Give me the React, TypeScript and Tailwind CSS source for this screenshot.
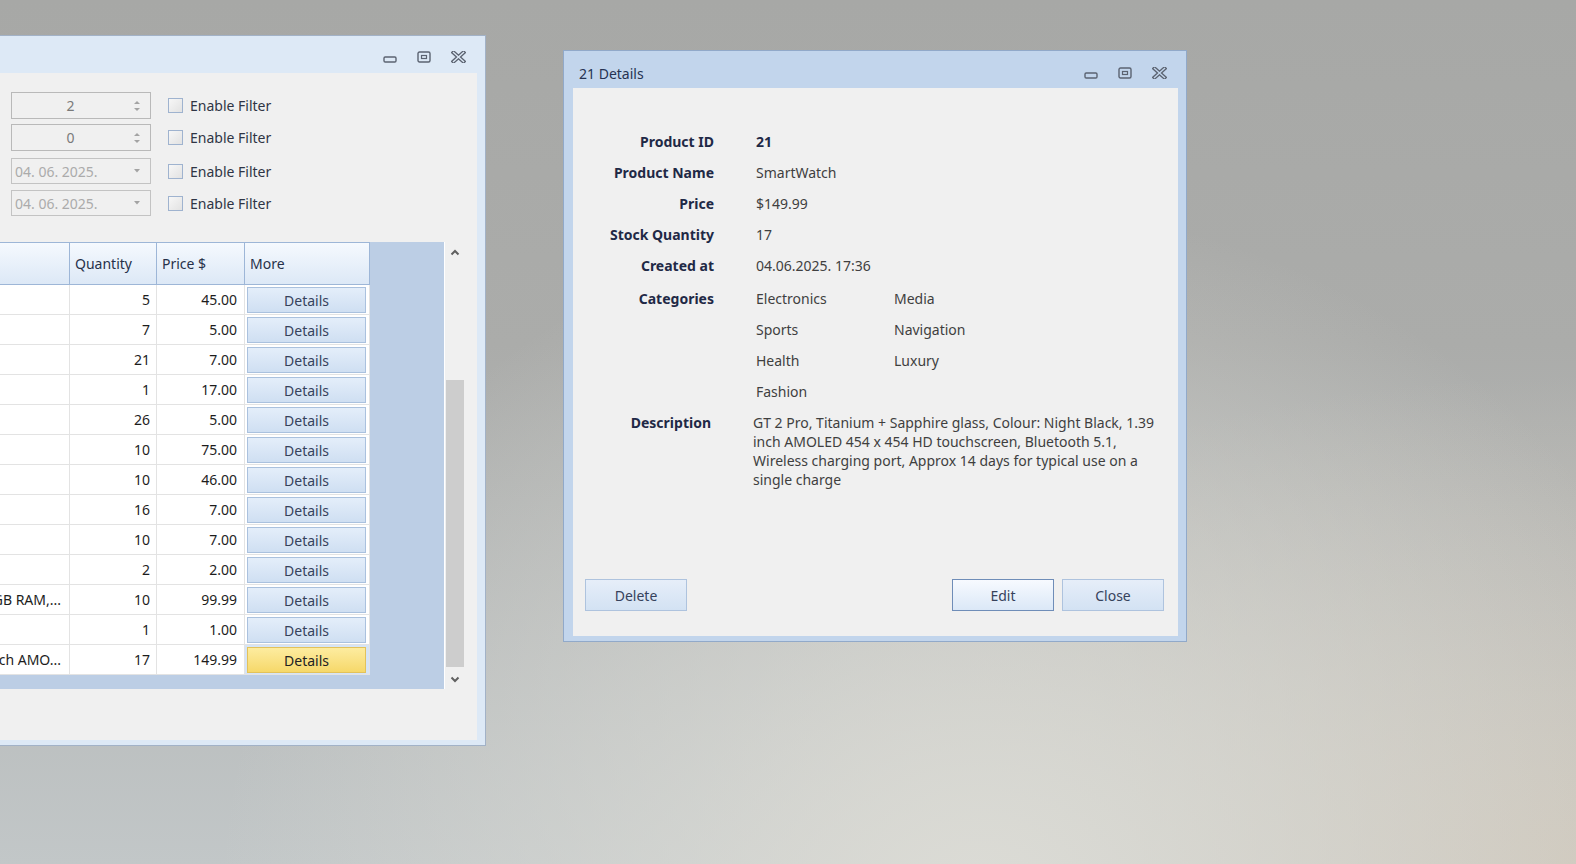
import React from 'react';

const font = "font-['Noto_Sans',sans-serif]";

const rows = [
  { name: '', qty: '5', price: '45.00' },
  { name: '', qty: '7', price: '5.00' },
  { name: '', qty: '21', price: '7.00' },
  { name: '', qty: '1', price: '17.00' },
  { name: '', qty: '26', price: '5.00' },
  { name: '', qty: '10', price: '75.00' },
  { name: '', qty: '10', price: '46.00' },
  { name: '', qty: '16', price: '7.00' },
  { name: '', qty: '10', price: '7.00' },
  { name: '', qty: '2', price: '2.00' },
  { name: '8GB RAM,...', qty: '10', price: '99.99' },
  { name: '', qty: '1', price: '1.00' },
  { name: 'inch AMO...', qty: '17', price: '149.99', active: true },
];

const details = [
  { label: 'Product ID', value: '21', bold: true },
  { label: 'Product Name', value: 'SmartWatch' },
  { label: 'Price', value: '$149.99' },
  { label: 'Stock Quantity', value: '17' },
  { label: 'Created at', value: '04.06.2025. 17:36' },
];

const categories = ['Electronics', 'Media', 'Sports', 'Navigation', 'Health', 'Luxury', 'Fashion'];

const TitleButtons = ({ bg }: { bg: string }) => (
  <div className="flex items-center gap-[20px]">
    <svg width="14" height="12" viewBox="0 0 14 12">
      <rect x="1" y="6" width="12" height="5" rx="1.2" fill="none" stroke="#5b6371" strokeWidth="1.4" />
    </svg>
    <svg width="14" height="12" viewBox="0 0 14 12">
      <rect x="1" y="1" width="12" height="10" rx="1.5" fill="none" stroke="#5b6371" strokeWidth="1.4" />
      <rect x="4.5" y="4.5" width="5" height="3" fill="none" stroke="#5b6371" strokeWidth="1.2" />
    </svg>
    <svg width="15" height="12" viewBox="0 0 15 12">
      <path d="M2.5 1.5 L12.5 10.5 M12.5 1.5 L2.5 10.5" stroke="#5b6371" strokeWidth="4" strokeLinecap="square" />
      <path d="M2.5 1.5 L12.5 10.5 M12.5 1.5 L2.5 10.5" stroke={bg} strokeWidth="1.4" strokeLinecap="square" />
    </svg>
  </div>
);

const SpinBox = ({ value }: { value: string }) => (
  <div className="flex h-[27px] w-[140px] items-center border border-[#b9b9b9] bg-[#f0f0f0]">
    <span className="flex-1 pr-[4px] text-center text-[14px] text-[#7a7a7a]">{value}</span>
    <svg width="8" height="14" viewBox="0 0 8 14" className="mr-[9px]">
      <path d="M1 5 L4 2 L7 5 Z" fill="#a3a3a3" />
      <path d="M1 9 L4 12 L7 9 Z" fill="#a3a3a3" />
    </svg>
  </div>
);

const DateBox = ({ value }: { value: string }) => (
  <div className="flex h-[26px] w-[140px] items-center border border-[#c3c3c3] bg-[#f0f0f0]">
    <span className="flex-1 pl-[3px] text-[14px] text-[#ababab]">{value}</span>
    <svg width="8" height="6" viewBox="0 0 8 6" className="mr-[9px]">
      <path d="M1 1 L4 4.5 L7 1 Z" fill="#a3a3a3" />
    </svg>
  </div>
);

const FilterCheck = () => (
  <div className="flex items-center">
    <div className="h-[15px] w-[15px] border border-[#9fb3cf] bg-linear-to-br from-[#f7f7f7] to-[#e2e2e2]" />
    <span className="ml-[7px] text-[14px] text-[#2f3544]">Enable Filter</span>
  </div>
);

export default function App() {
  return (
    <div
      className={`relative h-[864px] w-[1576px] overflow-hidden ${font} bg-[image:radial-gradient(ellipse_at_62%_105%,#dcdcd6_0%,rgba(220,220,214,0)_55%),radial-gradient(ellipse_at_100%_100%,#cec7bb_0%,rgba(206,199,187,0)_40%),linear-gradient(180deg,#a7a8a6_0%,#abacaa_40%,#c2c7c8_100%)]`}
    >
      {/* main window, partly off screen */}
      <div className="absolute left-0 top-[35px] flex h-[711px] w-[486px] flex-col border-y border-r border-[#a2b2c7] bg-[#dde9f6]">
        <div className="flex h-[37px] shrink-0 items-center justify-end pr-[19px] pt-[5px]">
          <TitleButtons bg="#dde9f6" />
        </div>
        <div className="mb-[5px] mr-[8px] flex flex-1 flex-col bg-[#f0f0f0]">
          <div className="flex flex-col pl-[11px] pt-[19px]">
            <div className="flex items-center gap-[17px]">
              <SpinBox value="2" />
              <FilterCheck />
            </div>
            <div className="mt-[5px] flex items-center gap-[17px]">
              <SpinBox value="0" />
              <FilterCheck />
            </div>
            <div className="mt-[7px] flex items-center gap-[17px]">
              <DateBox value="04. 06. 2025." />
              <FilterCheck />
            </div>
            <div className="mt-[6px] flex items-center gap-[17px]">
              <DateBox value="04. 06. 2025." />
              <FilterCheck />
            </div>
          </div>

          {/* grid */}
          <div className="mt-[26px] flex h-[447px]">
            <div className="w-[445px] border-r border-white bg-[#bccee5]">
              <div className="flex h-[43px] w-[370px] border-t border-[#9db6d7] bg-linear-to-b from-[#f5f9fe] to-[#dce8f6] text-[14px] text-[#27314a]">
                <div className="w-[70px] border-r border-b border-[#9db6d7]" />
                <div className="flex w-[87px] items-center border-r border-b border-[#9db6d7] pl-[5px]">Quantity</div>
                <div className="flex w-[88px] items-center border-r border-b border-[#9db6d7] pl-[5px]">Price $</div>
                <div className="flex w-[125px] items-center border-r border-b border-[#9db6d7] pl-[5px]">More</div>
              </div>
              {rows.map((row, index) => (
                <div key={index} className="flex h-[30px] w-[370px] bg-white text-[14px] text-[#1d1d1d]">
                  <div className="flex w-[70px] items-center justify-end overflow-hidden whitespace-nowrap border-r border-b border-[#e3e3e3] pr-[8px]">
                    {row.name}
                  </div>
                  <div className="flex w-[87px] items-center justify-end border-r border-b border-[#e3e3e3] pr-[6px]">{row.qty}</div>
                  <div className="flex w-[88px] items-center justify-end border-r border-b border-[#e3e3e3] pr-[7px]">{row.price}</div>
                  <div
                    className={`flex w-[125px] items-start border-r border-b border-[#e3e3e3] pl-[2px] pt-[2px] ${
                      row.active ? 'bg-[#d6e4f5]' : ''
                    }`}
                  >
                    <button
                      className={`h-[26px] w-[119px] border text-[14px] ${
                        row.active
                          ? 'border-[#e3c25a] bg-linear-to-b from-[#fdec9f] to-[#f6d869] text-[#222]'
                          : 'border-[#aac1de] bg-linear-to-b from-[#e4eefa] to-[#cfdff2] text-[#36425c]'
                      }`}
                    >
                      Details
                    </button>
                  </div>
                </div>
              ))}
            </div>
            {/* scrollbar */}
            <div className="flex w-[19px] flex-col">
              <div className="flex h-[20px] items-center justify-center">
                <svg width="10" height="7" viewBox="0 0 10 7">
                  <path d="M1.5 5.5 L5 2 L8.5 5.5" fill="none" stroke="#606060" strokeWidth="2" />
                </svg>
              </div>
              <div className="h-[118px]" />
              <div className="ml-[1px] h-[287px] w-[18px] bg-[#cdcdcd]" />
              <div className="h-[2px]" />
              <div className="flex h-[20px] items-center justify-center">
                <svg width="10" height="7" viewBox="0 0 10 7">
                  <path d="M1.5 1.5 L5 5 L8.5 1.5" fill="none" stroke="#606060" strokeWidth="2" />
                </svg>
              </div>
            </div>
          </div>
        </div>
      </div>

      {/* details window */}
      <div className="absolute left-[563px] top-[50px] flex h-[592px] w-[624px] flex-col border border-[#91a9c9] bg-[#c2d5ec]">
        <div className="flex h-[37px] shrink-0 items-center justify-between pl-[15px] pr-[19px] pt-[7px]">
          <span className="text-[14px] text-[#263352]">21 Details</span>
          <TitleButtons bg="#c2d5ec" />
        </div>
        <div className="mb-[5px] ml-[9px] mr-[8px] flex flex-1 flex-col bg-[#f0f0f0] text-[14px]">
          <div className="flex flex-col pt-[38px]">
            {details.map((d) => (
              <div key={d.label} className="grid h-[31px] grid-cols-[141px_1fr] items-center gap-x-[42px]">
                <span className="text-right font-bold text-[#1f2946]">{d.label}</span>
                <span className={d.bold ? 'font-bold text-[#1f2946]' : 'text-[#3f3f3f]'}>{d.value}</span>
              </div>
            ))}
            <div className="mt-[2px] grid grid-cols-[141px_1fr] gap-x-[42px]">
              <span className="flex h-[31px] items-center justify-end font-bold text-[#1f2946]">Categories</span>
              <div className="grid grid-cols-[138px_1fr]">
                {categories.map((c) => (
                  <span key={c} className="flex h-[31px] items-center text-[#3f3f3f]">
                    {c}
                  </span>
                ))}
              </div>
            </div>
            <div className="mt-[6px] grid grid-cols-[141px_1fr] gap-x-[42px]">
              <span className="pr-[3px] text-right font-bold leading-[19px] text-[#1f2946]">Description</span>
              <p className="-ml-[3px] w-[410px] leading-[19px] text-[#3f3f3f]">
                GT 2 Pro, Titanium + Sapphire glass, Colour: Night Black, 1.39 inch AMOLED 454 x 454 HD touchscreen,
                Bluetooth 5.1, Wireless charging port, Approx 14 days for typical use on a single charge
              </p>
            </div>
          </div>
          <div className="flex-1" />
          <div className="flex items-center pb-[25px] pl-[12px] pr-[14px]">
            <button className="h-[32px] w-[102px] border border-[#aec3de] bg-linear-to-b from-[#e6eef9] to-[#d3e2f3] text-[#36425c]">
              Delete
            </button>
            <div className="flex-1" />
            <button className="h-[32px] w-[102px] border border-[#6f8db8] bg-linear-to-b from-[#f7faff] to-[#dbe8f7] text-[#36425c]">
              Edit
            </button>
            <button className="ml-[8px] h-[32px] w-[102px] border border-[#aec3de] bg-linear-to-b from-[#e6eef9] to-[#d3e2f3] text-[#36425c]">
              Close
            </button>
          </div>
        </div>
      </div>
    </div>
  );
}
